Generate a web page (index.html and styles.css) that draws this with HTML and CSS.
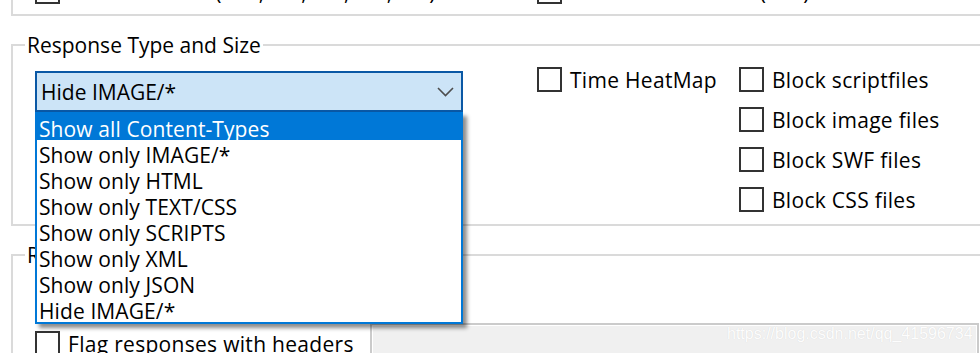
FILE: index.html
```html
<!DOCTYPE html>
<html lang="en">
<head>
  <meta charset="UTF-8">
  <meta name="viewport" content="width=device-width, initial-scale=1.0">
  <title>Filters - Response Type and Size</title>
  <link rel="stylesheet" href="styles.css">
</head>
<body>

  <div class="group status">
    <div class="row">
      <label class="check"><span class="box"></span>Hide redirects (300,301,302,303,307)</label>
      <label class="check span2"><span class="box"></span>Hide Not Modified (304)</label>
    </div>
  </div>

  <div class="group">
    <div class="group-title">Response Type and Size</div>
    <div class="row">
      <div class="combo-wrap">
        <div class="combo">
          <span>Hide IMAGE/*</span>
          <svg width="17" height="10" viewBox="0 0 17 10"><polyline points="1,1 8.5,8.5 16,1" fill="none" stroke="#4d4d4d" stroke-width="1.6"/></svg>
        </div>
        <ul class="drop">
          <li class="sel">Show all Content-Types</li>
          <li>Show only IMAGE/*</li>
          <li>Show only HTML</li>
          <li>Show only TEXT/CSS</li>
          <li>Show only SCRIPTS</li>
          <li>Show only XML</li>
          <li>Show only JSON</li>
          <li>Hide IMAGE/*</li>
        </ul>
      </div>
      <label class="check"><span class="box"></span>Time HeatMap</label>
      <div class="blocks">
        <label class="check"><span class="box"></span>Block scriptfiles</label>
        <label class="check"><span class="box"></span>Block image files</label>
        <label class="check"><span class="box"></span>Block SWF files</label>
        <label class="check"><span class="box"></span>Block CSS files</label>
      </div>
    </div>
  </div>

  <div class="group">
    <div class="group-title">Response Headers</div>
    <div class="headers">
      <label class="check"><span class="box"></span>Flag responses that set cookies</label>
      <div class="hdr-row">
        <label class="check hdr-check"><span class="box"></span>Flag responses with headers</label>
        <div class="textbox"></div>
      </div>
    </div>
  </div>

  <div class="watermark">https://blog.csdn.net/qq_41596734</div>

</body>
</html>
```

FILE: styles.css
```css
html, body {
  overflow: hidden;
}
body {
  margin: 0;
  font-family: "Open Sans", "Noto Sans", sans-serif;
  font-size: 21px;
  line-height: 28px;
  color: #000;
  background: #fff;
  position: relative;
  height: 353px;
}
.group {
  width: 1000px;
  margin: 28px 0 0 11px;
  border: 2px solid #dadada;
  padding: 0 0 12px 22px;
}
.status {
  margin-top: -40px;
  border-top: none;
  height: 35px;
  padding: 19px 0 0 22px;
}
.group-title {
  width: max-content;
  margin: -15px 0 0 -10px;
  padding: 0 2px;
  background: #fff;
}
.row {
  display: grid;
  grid-template-columns: 502px 202px auto;
  align-items: start;
  margin-top: 8px;
}
.status .row {
  margin-top: 0;
}
.span2 {
  grid-column: span 2;
}
.check {
  display: flex;
  align-items: center;
  gap: 8px;
  height: 25px;
  white-space: nowrap;
  letter-spacing: 0.3px;
}
.box {
  flex: 0 0 auto;
  width: 25px;
  height: 25px;
  box-sizing: border-box;
  border: 2px solid #333;
  background: #fff;
}
.blocks {
  display: flex;
  flex-direction: column;
  gap: 15px;
}

/* combo box with its open list */
.combo-wrap {
  position: relative;
  width: 428px;
  margin-top: 4px;
  z-index: 10;
}
.combo {
  display: flex;
  align-items: center;
  justify-content: space-between;
  height: 41px;
  box-sizing: border-box;
  border: 2px solid #0a58a5;
  background: #cce4f7;
  padding: 1px 7px 0 4px;
}
.drop {
  position: absolute;
  top: 100%;
  left: 0;
  right: 0;
  margin: 0;
  padding: 0;
  list-style: none;
  background: #fff;
  border: 2px solid #0078d7;
  box-shadow: 4px 4px 4px rgba(0, 0, 0, 0.45);
}
.drop li {
  height: 26px;
  line-height: 30px;
  padding-left: 2px;
  white-space: nowrap;
  letter-spacing: 0.1px;
}
.drop li.sel {
  background: #0078d7;
  color: #fff;
}

.headers {
  display: flex;
  flex-direction: column;
  gap: 15px;
  margin-top: 14px;
}
.hdr-row {
  display: flex;
  align-items: center;
}
.hdr-check {
  flex: 0 0 335px;
}
.textbox {
  width: 609px;
  height: 41px;
  box-sizing: border-box;
  border: 2px solid #cbcbcb;
  box-shadow: inset 0 0 0 1px #fff;
  background: #f0f0f0;
}
.watermark {
  position: absolute;
  left: 727px;
  top: 325px;
  font-family: "Liberation Sans", Arial, sans-serif;
  font-size: 16px;
  line-height: 18px;
  color: #fdfdfd;
  text-shadow: 0 0 1px rgba(0, 0, 0, 0.12);
}
```
